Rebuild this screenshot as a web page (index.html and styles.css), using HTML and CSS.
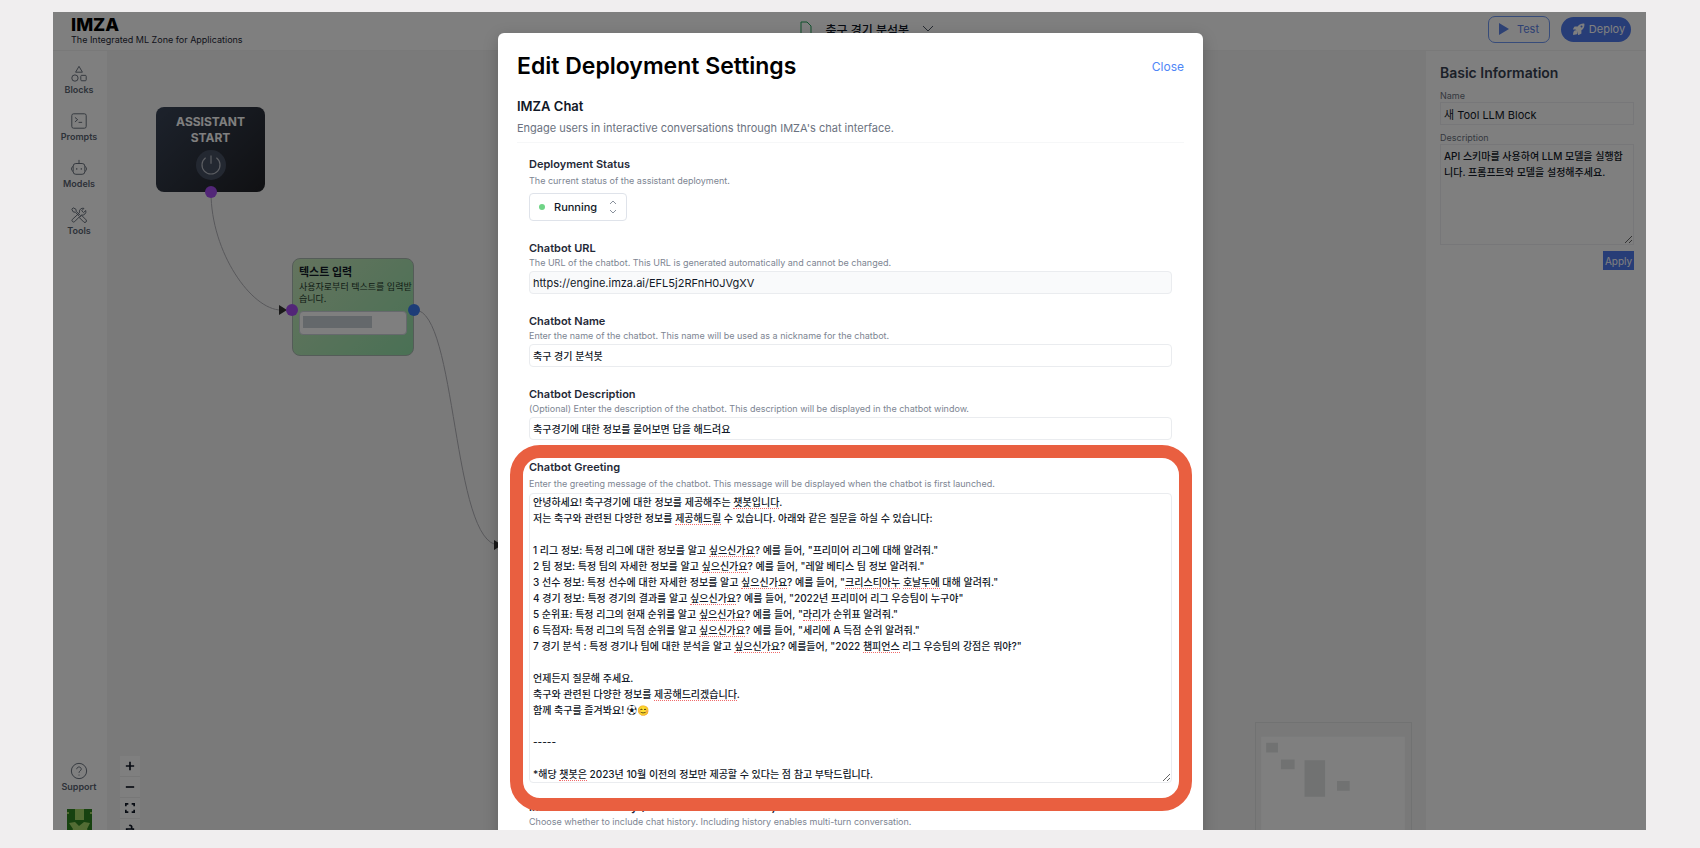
FILE: index.html
```
<!DOCTYPE html>
<html lang="ko">
<head>
    <meta charset="UTF-8">
    <meta name="viewport" content="width=device-width, initial-scale=1.0">
    <title>IMZA - Edit Deployment Settings</title>
    <link rel="stylesheet" href="styles.css">
</head>
<body>
    <div class="app">
        <header class="topbar">
            <div class="brand">
                <span class="logo">IMZA</span>
                <span class="tagline">The Integrated ML Zone for Applications</span>
            </div>
            <button class="project" type="button">
                <svg class="file-icon" viewBox="0 0 12 16" width="12" height="16"><path d="M1 1h6l4 4v10H1z"/></svg>
                <span>축구 경기 분석봇</span>
                <svg class="chevron" viewBox="0 0 12 8" width="12" height="8"><path d="M1 1l5 5 5-5"/></svg>
            </button>
            <div class="actions">
                <button class="btn-test" type="button">
                    <svg viewBox="0 0 10 12" width="10" height="12"><path d="M0 0l10 6-10 6z" fill="currentColor"/></svg>
                    Test
                </button>
                <button class="btn-deploy" type="button">
                    <svg viewBox="0 0 24 24" width="12" height="12"><path fill="currentColor" fill-rule="evenodd" d="M9.3 7.1C13 2 17.500.9 22.200 1.200a1 1 0 0 1 .6.6c.4 4.700-.9 9.200-6 12.900v5.600a1.500 1.500 0 0 1-.8 1.300l-4.600 2.300a1 1 0 0 1-1.400-.9v-4.800L5 13.200H.9a1 1 0 0 1-.8-1.400l2.200-4a1.500 1.500 0 0 1 1.300-.8zM17 9.200a2 2 0 1 0 0-4 2 2 0 0 0 0 4zM2 16c1.700-1.700 4.500-1.700 6.200 0s1.700 4.500 0 6.200C6.700 23.700 0 24 0 24s.5-6.500 2-8z"/></svg>
                    Deploy
                </button>
            </div>
        </header>

        <div class="workspace">
            <nav class="sidebar">
                <a href="#blocks">
                    <svg viewBox="0 0 20 20" width="18" height="18"><path d="M10 1.500l3.800 6.500H6.200z"/><circle cx="5.500" cy="14.500" r="3.500"/><rect x="12" y="11.500" width="6" height="6" rx="1"/></svg>
                    Blocks
                </a>
                <a href="#prompts">
                    <svg viewBox="0 0 20 20" width="18" height="18"><rect x="2" y="2" width="16" height="16" rx="2"/><path d="M5.500 6l3 2.500-3 2.500M9.500 11.500h4"/></svg>
                    Prompts
                </a>
                <a href="#models">
                    <svg viewBox="0 0 20 20" width="20" height="18"><path d="M10 1v4"/><rect x="3.500" y="5" width="13" height="12" rx="3"/><path d="M3.500 8.500C1 8.500 1 13.500 3.500 13.500M16.500 8.500c2.500 0 2.500 5 0 5M7.500 10v2M12.500 10v2"/></svg>
                    Models
                </a>
                <a href="#tools">
                    <svg viewBox="0 0 20 20" width="18" height="18"><path d="M2 3.500L3.500 2l3 1.500.5 2.500 4 4M2 3.500l1.500 3L6 7l4 4M11.500 12l1.500-1.500 5 5a1.800 1.800 0 0 1-2.500 2.500l-5-5zM17.500 5l-2.500 2.300-2-2L15.500 2.600a4 4 0 0 0-5 5L2.500 15a1.800 1.800 0 0 0 2.500 2.500l7.500-7.500a4 4 0 0 0 5-5z"/></svg>
                    Tools
                </a>
                <a class="support" href="#support">
                    <svg viewBox="0 0 20 20" width="18" height="18"><circle cx="10" cy="10" r="8.500"/><path d="M7.500 8c0-3.300 5-3.300 5 0 0 1.800-2.500 1.800-2.500 4M10 14v1"/></svg>
                    Support
                </a>
                <svg class="avatar" viewBox="0 0 25 25" width="25" height="25">
                    <path fill="#2f8420" d="M0 0h25v25H0z"/>
                    <path fill="#a6d968" d="M8 0h9v11H8zM2 14l6-1 4 4 5-4 6 1-3 6 2 5H4l2-5zM0 3h2v2H0zM23 3h2v2h-2z"/>
                </svg>
            </nav>

            <main class="canvas">
                <svg class="edges" width="100%" height="100%">
                    <path d="M104 141C104 202 145 259 174 259"/>
                    <path d="M308 259C350 259 345 494 392 494"/>
                    <path class="arrow" d="M172 254l8 5-8 5zM387 489l8 5-8 5z"/>
                </svg>

                <div class="node node-start">
                    <strong>ASSISTANT START</strong>
                    <span class="power">
                        <svg viewBox="0 0 20 20" width="24" height="24"><path d="M10 2v7M5.500 4a7.500 7.500 0 1 0 9 0"/></svg>
                    </span>
                    <i class="handle handle-bottom"></i>
                </div>

                <div class="node node-text">
                    <strong>텍스트 입력</strong>
                    <p>사용자로부터 텍스트를 입력받습니다.</p>
                    <div class="node-input"><span></span></div>
                    <i class="handle handle-left"></i>
                    <i class="handle handle-right"></i>
                </div>

                <div class="controls">
                    <button type="button" aria-label="Zoom in"><svg viewBox="0 0 12 12" width="10" height="10"><path d="M6 1v10M1 6h10"/></svg></button>
                    <button type="button" aria-label="Zoom out"><svg viewBox="0 0 12 12" width="10" height="10"><path d="M1 6h10"/></svg></button>
                    <button type="button" aria-label="Fit view"><svg viewBox="0 0 12 12" width="10" height="10"><path d="M1 4V1h3M8 1h3v3M11 8v3H8M4 11H1V8"/></svg></button>
                    <button type="button" aria-label="Lock"><svg viewBox="0 0 12 12" width="10" height="10"><path d="M2 6h8v5H2zM8 6V3a2 2 0 0 0-3-1"/></svg></button>
                </div>

                <svg class="minimap" viewBox="0 0 157 120" width="157" height="120">
                    <rect class="view" x="5" y="14" width="146" height="106"/>
                    <path d="M10 20h12v10H10zM25 37h14v10H25zM49 38h21v37H49zM82 59h13v10H82z"/>
                </svg>
            </main>

            <aside class="panel">
                <form class="info">
                    <h2>Basic Information</h2>
                    <label for="block-name">Name</label>
                    <input id="block-name" type="text" value="새 Tool LLM Block">
                    <label for="block-desc">Description</label>
                    <textarea id="block-desc" spellcheck="false">API 스키마를 사용하여 LLM 모델을 실행합니다. 프롬프트와 모델을 설정해주세요.</textarea>
                    <button class="btn-apply" type="button">Apply</button>
                </form>
            </aside>
        </div>

        <div class="overlay">
            <section class="modal" role="dialog" aria-labelledby="modal-title">
                <div class="modal-head">
                    <h1 id="modal-title">Edit Deployment Settings</h1>
                    <button class="btn-close" type="button">Close</button>
                </div>
                <div class="section-head">
                    <h2>IMZA Chat</h2>
                    <p>Engage users in interactive conversations through IMZA's chat interface.</p>
                </div>

                <form class="fields">
                    <div class="field roomy">
                        <label for="status">Deployment Status</label>
                        <p>The current status of the assistant deployment.</p>
                        <div class="select">
                            <i class="dot"></i>
                            <select id="status">
                                <option>Running</option>
                                <option>Stopped</option>
                            </select>
                            <svg viewBox="0 0 8 14" width="8" height="14"><path d="M1 4l3-3 3 3M1 10l3 3 3-3"/></svg>
                        </div>
                    </div>
                    <div class="field">
                        <label for="url">Chatbot URL</label>
                        <p>The URL of the chatbot. This URL is generated automatically and cannot be changed.</p>
                        <input id="url" type="text" value="https://engine.imza.ai/EFL5j2RFnH0JVgXV" readonly>
                    </div>
                    <div class="field">
                        <label for="name">Chatbot Name</label>
                        <p>Enter the name of the chatbot. This name will be used as a nickname for the chatbot.</p>
                        <input id="name" type="text" value="축구 경기 분석봇">
                    </div>
                    <div class="field">
                        <label for="desc">Chatbot Description</label>
                        <p>(Optional) Enter the description of the chatbot. This description will be displayed in the chatbot window.</p>
                        <input id="desc" type="text" value="축구경기에 대한 정보를 물어보면 답을 해드려요">
                    </div>
                    <div class="field roomy marked">
                        <label for="greeting">Chatbot Greeting</label>
                        <p>Enter the greeting message of the chatbot. This message will be displayed when the chatbot is first launched.</p>
                        <div class="editor">
                            <textarea id="greeting" rows="18" spellcheck="false">안녕하세요! 축구경기에 대한 정보를 제공해주는 챗봇입니다.
저는 축구와 관련된 다양한 정보를 제공해드릴 수 있습니다. 아래와 같은 질문을 하실 수 있습니다:

1 리그 정보: 특정 리그에 대한 정보를 알고 싶으신가요? 예를 들어, "프리미어 리그에 대해 알려줘."
2 팀 정보: 특정 팀의 자세한 정보를 알고 싶으신가요? 예를 들어, "레알 베티스 팀 정보 알려줘."
3 선수 정보: 특정 선수에 대한 자세한 정보를 알고 싶으신가요? 예를 들어, "크리스티아누 호날두에 대해 알려줘."
4 경기 정보: 특정 경기의 결과를 알고 싶으신가요? 예를 들어, "2022년 프리미어 리그 우승팀이 누구야"
5 순위표: 특정 리그의 현재 순위를 알고 싶으신가요? 예를 들어, "라리가 순위표 알려줘."
6 득점자: 특정 리그의 득점 순위를 알고 싶으신가요? 예를 들어, "세리에 A 득점 순위 알려줘."
7 경기 분석 : 특정 경기나 팀에 대한 분석을 알고 싶으신가요? 예를들어, "2022 챔피언스 리그 우승팀의 강점은 뭐야?"

언제든지 질문해 주세요.
축구와 관련된 다양한 정보를 제공해드리겠습니다.
함께 축구를 즐겨봐요! ⚽😊

-----

*해당 챗봇은 2023년 10월 이전의 정보만 제공할 수 있다는 점 참고 부탁드립니다.</textarea>
                            <div class="spelling" id="spelling"></div>
                        </div>
                    </div>
                    <div class="field">
                        <label for="history">Include Chat History (Multi-turn Conversation)</label>
                        <p>Choose whether to include chat history. Including history enables multi-turn conversation.</p>
                        <input id="history" type="checkbox" checked>
                    </div>
                </form>
            </section>
        </div>
    </div>

    <script>
        const greeting = document.getElementById("greeting");
        const spelling = document.getElementById("spelling");
        const pen = document.createElement("canvas").getContext("2d");
        const unknownWords = /챗봇입니다|제공해드릴|싶으신가요|크리스티아누|호날두에|라리가|챔피언스|제공해드리겠습니다|챗봇은/g;

        // Underline the unknown words, one row of marks for each line of text
        function markSpelling() {
            const style = getComputedStyle(greeting);
            pen.font = `${style.fontWeight} ${style.fontSize} ${style.fontFamily}`;
            spelling.innerHTML = "";

            greeting.value.split("\n").forEach((line) => {
                const row = document.createElement("div");
                for (const match of line.matchAll(unknownWords)) {
                    const mark = document.createElement("i");
                    mark.style.left = pen.measureText(line.slice(0, match.index)).width + "px";
                    mark.style.width = pen.measureText(match[0]).width + "px";
                    row.appendChild(mark);
                }
                spelling.appendChild(row);
            });
        }

        greeting.addEventListener("input", markSpelling);
        markSpelling();
    </script>
</body>
</html>
```
FILE: styles.css
```
/* General Styling */
* {
    box-sizing: border-box;
}

body {
    margin: 0;
    padding: 12px 54px 18px 53px;
    height: 100vh;
    background: #f0eeef;
    color: #111827;
    font-family: Inter, "Noto Sans CJK KR", sans-serif;
    font-size: 10px;
}

h1, h2, p {
    margin: 0;
}

button, input, select, textarea {
    font: inherit;
    color: inherit;
}

button {
    padding: 0;
    border: none;
    background: none;
    cursor: pointer;
}

svg {
    fill: none;
    stroke: currentColor;
    flex-shrink: 0;
}

.app {
    position: relative;
    display: flex;
    flex-direction: column;
    height: 100%;
    overflow: hidden;
    background: #fff;
}

/* Top Bar */
.topbar {
    display: flex;
    justify-content: space-between;
    align-items: center;
    height: 39px;
    padding: 0 15px 4px 18px;
    border-bottom: 1px solid #f3f3f3;
}

.brand {
    display: flex;
    flex-direction: column;
    align-self: flex-start;
    padding-top: 4px;
}

.logo {
    font-size: 18px;
    line-height: 18px;
    font-weight: 800;
    color: #000;
}

.tagline {
    font-size: 9px;
    line-height: 12px;
    color: #1f2937;
}

.project {
    display: flex;
    align-items: center;
    gap: 13px;
    padding-left: 4px;
    font-size: 12px;
    font-weight: 500;
}

.file-icon {
    color: #22a35a;
}

.chevron {
    color: #4b5563;
}

.actions {
    display: flex;
    justify-content: flex-end;
    align-items: center;
    gap: 11px;
    font-size: 11px;
}

.actions svg {
    stroke: none;
}

.btn-test, .btn-deploy {
    display: flex;
    justify-content: center;
    align-items: center;
}

.btn-test {
    gap: 8px;
    width: 62px;
    height: 27px;
    border: 1px solid #6f98f5;
    border-radius: 7px;
    color: #5b82e8;
}

.btn-deploy {
    gap: 4px;
    width: 70px;
    height: 25px;
    padding-left: 6px;
    border-radius: 13px;
    background: #4f7bee;
    color: #fff;
}

.workspace {
    display: flex;
    flex: 1;
    min-height: 0;
}

/* Sidebar */
.sidebar {
    display: flex;
    flex-direction: column;
    align-items: center;
    gap: 15px;
    width: 54px;
    padding: 14px 2px 0 0;
}

.sidebar a {
    display: flex;
    flex-direction: column;
    align-items: center;
    color: #5b6472;
    font-size: 9px;
    line-height: 14px;
    font-weight: 600;
    text-decoration: none;
}

.sidebar .support {
    margin-top: auto;
}

.avatar {
    margin-bottom: -4px;
    stroke: none;
}

/* Canvas */
.canvas {
    position: relative;
    flex: 1;
    overflow: hidden;
    background: #f5f5f5;
}

.edges {
    position: absolute;
    inset: 0;
    color: #b1b1b7;
}

.edges .arrow {
    fill: #333;
    stroke: none;
}

.node {
    position: absolute;
    border-radius: 8px;
}

.node-start {
    left: 49px;
    top: 56px;
    display: flex;
    flex-direction: column;
    align-items: center;
    width: 109px;
    height: 85px;
    padding: 7px 16px;
    background: linear-gradient(135deg, #3a4558, #202126);
    color: #fff;
    font-size: 12px;
    line-height: 16px;
    text-align: center;
}

.power {
    display: grid;
    place-items: center;
    width: 30px;
    height: 30px;
    margin-top: 4px;
    border-radius: 50%;
    background: #475063;
    color: #b8bcc4;
}

.node-text {
    left: 185px;
    top: 207px;
    width: 122px;
    height: 98px;
    padding: 6px;
    border: 1px solid #a9b8b0;
    background: linear-gradient(135deg, #c9e8bd, #94e2aa);
    line-height: 12px;
}

/* The text may run up to the border, so the first line is not cut short */
.node-text p {
    margin: 2px -6px 0 0;
    color: #1f3a2c;
    font-size: 9px;
    word-break: break-all;
}

.node-text strong {
    display: block;
    font-size: 11px;
    line-height: 14px;
}

.node-input {
    height: 24px;
    margin-top: 6px;
    padding: 4px 3px;
    border: 1px solid #ccd3da;
    border-radius: 4px;
    background: #fff;
}

.node-input span {
    display: block;
    width: 69px;
    height: 12px;
    background: #c9d1d6;
}

.handle {
    position: absolute;
    width: 12px;
    height: 12px;
    border-radius: 50%;
    background: #a44df0;
}

.handle-bottom {
    left: 49px;
    bottom: -6px;
}

.handle-left {
    left: -7px;
    top: 45px;
}

.handle-right {
    right: -7px;
    top: 45px;
    background: #3b7bf0;
}

.controls {
    position: absolute;
    left: 13px;
    top: 705px;
    background: #fff;
}

.controls button {
    display: grid;
    place-items: center;
    width: 20px;
    height: 21px;
    border-bottom: 1px solid #eee;
}

.controls svg {
    stroke-width: 2;
}

.minimap {
    position: absolute;
    right: 14px;
    top: 671px;
    border: 1px solid #e2e4e4;
    background: #f2f3f3;
    fill: #e2e5e5;
    stroke: none;
}

.minimap .view {
    fill: #fff;
}

/* Right Panel */
.panel {
    width: 220px;
    padding: 12px 12px 0 14px;
}

.info {
    display: flex;
    flex-direction: column;
    height: 208px;
}

.info h2 {
    font-size: 14px;
    line-height: 20px;
    font-weight: 600;
    color: #374151;
}

.info label {
    color: #6b7280;
    font-size: 9px;
    line-height: 12px;
}

.info h2 + label {
    margin-top: 7px;
}

.info input, .info textarea {
    padding: 3px;
    border: 1px solid #eeeff2;
    background: #fff;
    line-height: 16px;
}

.info input {
    height: 23px;
    margin-bottom: 7px;
    font-size: 11px;
}

.info textarea {
    height: 101px;
    font-weight: 500;
    resize: vertical;
}

.btn-apply {
    align-self: flex-end;
    width: 31px;
    height: 19px;
    margin-top: 6px;
    background: #4f7bee;
    color: #fff;
}

/* Modal */
.overlay {
    position: absolute;
    inset: 0;
    display: flex;
    justify-content: center;
    align-items: flex-start;
    padding: 21px 0 0 2px;
    overflow: hidden;
    background: rgba(0, 0, 0, 0.5);
}

.modal {
    width: 100%;
    max-width: 705px;
    padding: 18px 19px;
    border-radius: 6px;
    background: #fff;
    box-shadow: 0 4px 16px rgba(0, 0, 0, 0.2);
}

.modal-head {
    display: flex;
    justify-content: space-between;
    align-items: center;
}

.modal-head h1 {
    font-size: 23px;
    line-height: 30px;
    font-weight: 600;
    color: #000;
}

.btn-close {
    color: #4f86f7;
    font-size: 12px;
}

.section-head {
    margin-top: 15px;
    padding-bottom: 5px;
    border-bottom: 1px solid #f6f7f8;
}

.section-head h2 {
    font-size: 13px;
    line-height: 20px;
    font-weight: 600;
}

.section-head p {
    padding-top: 3px;
    color: #6b7280;
    font-size: 11px;
    line-height: 18px;
}

.fields {
    display: flex;
    flex-direction: column;
    gap: 19px;
    padding: 13px 12px 0;
}

.field {
    display: flex;
    flex-direction: column;
    align-items: flex-start;
}

.field label {
    font-size: 11px;
    line-height: 16px;
    font-weight: 600;
    color: #1f2937;
}

.field p {
    color: #7d8592;
    font-size: 9px;
    line-height: 14px;
}

.roomy p {
    line-height: 18px;
}

.field input[type="text"] {
    width: 100%;
    height: 23px;
    margin-top: 1px;
    padding: 0 3px;
    border: 1px solid #eaecef;
    border-radius: 4px;
    background: #fff;
    font-weight: 500;
}

.field input[readonly] {
    background: #f9fafb;
    font-size: 11px;
    font-weight: 400;
}

.select {
    position: relative;
    margin-top: 3px;
}

.select select {
    appearance: none;
    width: 98px;
    height: 28px;
    padding: 0 24px;
    border: 1px solid #dfe3ea;
    border-radius: 4px;
    background: #fff;
    font-size: 11px;
    font-weight: 500;
}

.select svg {
    position: absolute;
    right: 10px;
    top: 7px;
    color: #8a919c;
}

.dot {
    position: absolute;
    left: 10px;
    top: 11px;
    width: 6px;
    height: 6px;
    border-radius: 50%;
    background: #6fd486;
}

/* Greeting Editor */
.marked {
    position: relative;
    margin-bottom: -3px;
}

/* Thick frame around the whole field */
.marked::after {
    content: "";
    position: absolute;
    inset: -14px -20px -28px -19px;
    border: 13px solid #e95f40;
    border-radius: 30px;
    pointer-events: none;
}

.editor {
    position: relative;
    width: 100%;
}

.editor textarea {
    display: block;
    width: 100%;
    padding: 0 3px;
    border: 1px solid #eaecef;
    border-radius: 4px;
    overflow: hidden;
    line-height: 16px;
    font-weight: 500;
    white-space: pre;
    resize: vertical;
}

.spelling {
    position: absolute;
    inset: 1px 4px;
    overflow: hidden;
    pointer-events: none;
}

.spelling div {
    position: relative;
    height: 16px;
}

.spelling i {
    position: absolute;
    bottom: 1px;
    border-bottom: 1px dotted #f06a6a;
}
```
